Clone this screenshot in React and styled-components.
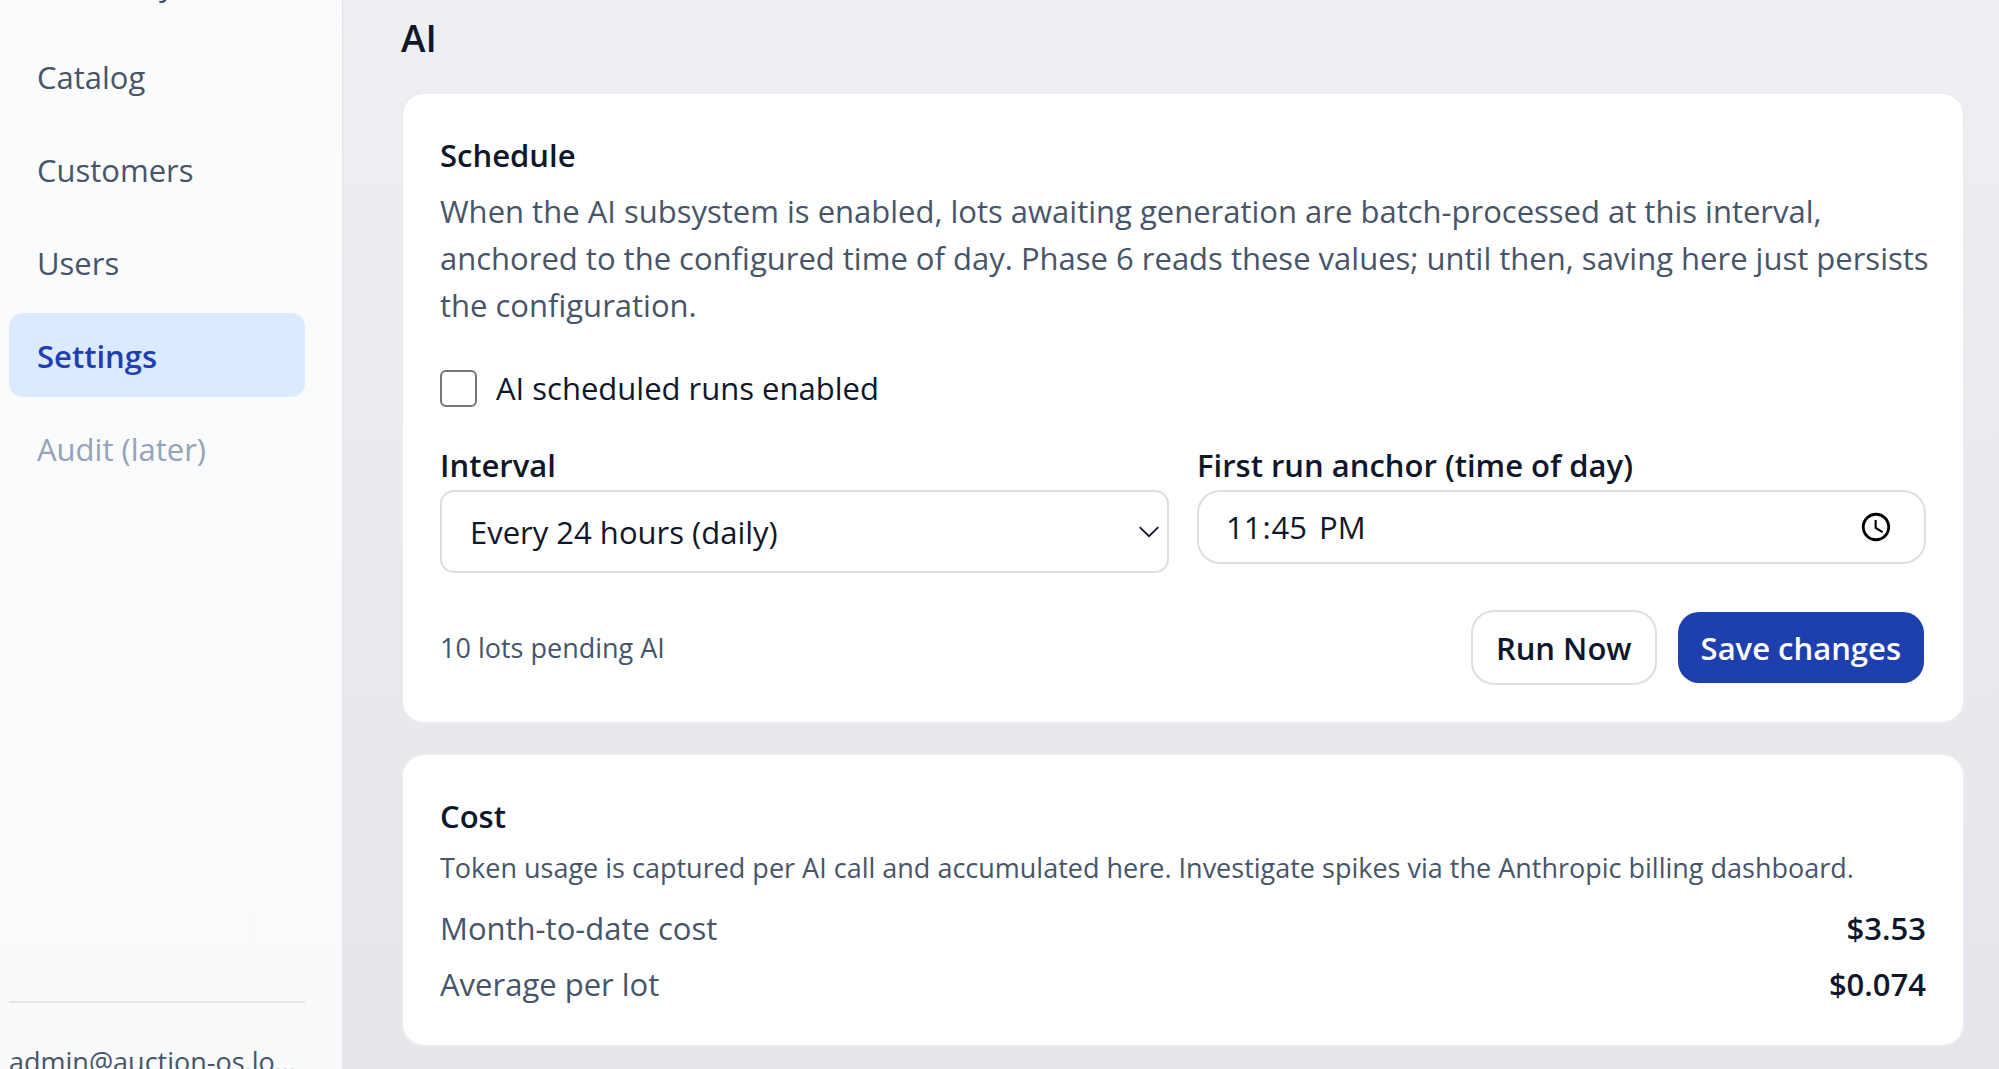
import React, { useState } from "react";
import styled, { createGlobalStyle } from "styled-components";

const NAV_ITEMS = [
    { label: "Inventory", href: "#inventory" },
    { label: "Catalog", href: "#catalog" },
    { label: "Customers", href: "#customers" },
    { label: "Users", href: "#users" },
    { label: "Settings", href: "#settings" },
];

const INTERVALS = [
    { value: "6", label: "Every 6 hours" },
    { value: "12", label: "Every 12 hours" },
    { value: "24", label: "Every 24 hours (daily)" },
];

const COSTS = [
    { label: "Month-to-date cost", value: "$3.53" },
    { label: "Average per lot", value: "$0.074" },
];

function Sidebar() {
    return (
        <Aside>
            <Nav>
                {NAV_ITEMS.map(({ label, href }) => (
                    <NavLink key={label} href={href} $active={label === "Settings"}>
                        {label}
                    </NavLink>
                ))}
                <NavDisabled>Audit (later)</NavDisabled>
            </Nav>
            <Account>admin@auction-os.local</Account>
        </Aside>
    );
}

function ScheduleCard() {
    const [enabled, setEnabled] = useState(false);
    const [interval, setInterval] = useState("24");
    const [anchor, setAnchor] = useState("23:45");

    return (
        <Card>
            <CardTitle>Schedule</CardTitle>
            <Description>
                When the AI subsystem is enabled, lots awaiting generation are
                batch-processed at this interval, anchored to the configured time
                of day. Phase 6 reads these values; until then, saving here just
                persists the configuration.
            </Description>
            <CheckLabel htmlFor="ai-enabled">
                <Checkbox
                    id="ai-enabled"
                    type="checkbox"
                    checked={enabled}
                    onChange={(e) => setEnabled(e.target.checked)}
                />
                AI scheduled runs enabled
            </CheckLabel>
            <Fields>
                <Field>
                    <FieldLabel htmlFor="interval">Interval</FieldLabel>
                    <SelectWrap>
                        <Select
                            id="interval"
                            value={interval}
                            onChange={(e) => setInterval(e.target.value)}
                        >
                            {INTERVALS.map(({ value, label }) => (
                                <option key={value} value={value}>
                                    {label}
                                </option>
                            ))}
                        </Select>
                        <Chevron viewBox="0 0 20 12" aria-hidden="true">
                            <path d="M.7 1.2 10 10.2 19.3 1.2" />
                        </Chevron>
                    </SelectWrap>
                </Field>
                <Field>
                    <FieldLabel htmlFor="anchor">
                        First run anchor (time of day)
                    </FieldLabel>
                    <TimeInput
                        id="anchor"
                        type="time"
                        value={anchor}
                        onChange={(e) => setAnchor(e.target.value)}
                    />
                </Field>
            </Fields>
            <Actions>
                <Hint>10 lots pending AI</Hint>
                <Button type="button">Run Now</Button>
                <Button type="button" $primary>
                    Save changes
                </Button>
            </Actions>
        </Card>
    );
}

function CostCard() {
    return (
        <Card>
            <CardTitle>Cost</CardTitle>
            <Hint>
                Token usage is captured per AI call and accumulated here.
                Investigate spikes via the Anthropic billing dashboard.
            </Hint>
            <CostList>
                {COSTS.map(({ label, value }) => (
                    <CostRow key={label}>
                        <dt>{label}</dt>
                        <dd>{value}</dd>
                    </CostRow>
                ))}
            </CostList>
        </Card>
    );
}

function App() {
    return (
        <>
            <GlobalStyle />
            <Layout>
                <Sidebar />
                <Main>
                    <PageTitle>AI</PageTitle>
                    <ScheduleCard />
                    <CostCard />
                </Main>
            </Layout>
        </>
    );
}

const GlobalStyle = createGlobalStyle`
    * {
        box-sizing: border-box;
    }

    body {
        margin: 0;
        color: #0f172a;
        font-family: "Segoe UI", "Open Sans", sans-serif;
        font-size: 31px;
        line-height: 47px;
    }

    h1, h2, p, dl, dd {
        margin: 0;
    }
`;

const Layout = styled.div`
    display: flex;
    height: 100vh;
    overflow: hidden;
    background: linear-gradient(#eeeff3, #e5e6eb);
`;

const Aside = styled.aside`
    display: flex;
    flex-direction: column;
    flex: none;
    width: 343px;
    padding: 0 37px 0 9px;
    border-right: 1px solid #e4e5e7;
    background: linear-gradient(#f9fbfd, #fbfcfb 12%, #fafbfc 25%, #f9fafc);
    overflow: hidden;
`;

const Nav = styled.nav`
    display: flex;
    flex-direction: column;
    gap: 9px;
    margin-top: -59px;
`;

const NavLink = styled.a`
    padding: 20px 28px 17px;
    border-radius: 14px;
    color: ${({ $active }) => ($active ? "#1e40af" : "#475569")};
    background: ${({ $active }) => ($active ? "#dbeafe" : "transparent")};
    font-weight: ${({ $active }) => ($active ? 600 : 400)};
    text-decoration: none;
`;

const NavDisabled = styled.span`
    padding: 20px 28px 17px;
    color: #94a3b8;
`;

const Account = styled.div`
    flex: none;
    height: 68px;
    margin-top: auto;
    padding-top: 39px;
    border-top: 2px solid #e6e7e9;
    color: #475569;
    font-size: 27px;
    line-height: 40px;
    overflow: hidden;
    text-overflow: ellipsis;
    white-space: nowrap;
`;

const Main = styled.main`
    display: flex;
    flex-direction: column;
    flex: 1;
    gap: 29px;
    min-width: 0;
    padding: 13px 34px 24px 58px;
`;

const PageTitle = styled.h1`
    font-size: 37px;
    font-weight: 600;
    line-height: 50px;
`;

const Card = styled.section`
    display: flex;
    flex-direction: column;
    padding: 38px 37px 37px;
    border: 2px solid #ebecee;
    border-radius: 23px;
    background: #fff;
`;

const CardTitle = styled.h2`
    margin-bottom: 9px;
    font-size: 31px;
    font-weight: 600;
    line-height: 47px;
`;

const Description = styled.p`
    margin-right: -12px;
    color: #475569;
`;

const CheckLabel = styled.label`
    display: flex;
    align-items: center;
    gap: 19px;
    margin-top: 36px;
`;

const Checkbox = styled.input`
    appearance: none;
    width: 37px;
    height: 37px;
    margin: 0;
    border: 2px solid #767676;
    border-radius: 6px;
    background: #fff;

    &:checked {
        border-color: #1e40af;
        background: #1e40af;
    }
`;

const Fields = styled.div`
    display: grid;
    grid-template-columns: 1fr 1fr;
    align-items: start;
    gap: 28px;
    margin-top: 30px;
`;

const Field = styled.div`
    display: flex;
    flex-direction: column;
    gap: 1px;
`;

const FieldLabel = styled.label`
    font-weight: 600;
`;

const SelectWrap = styled.div`
    position: relative;
`;

const Select = styled.select`
    appearance: none;
    width: 100%;
    height: 83px;
    padding: 2px 60px 0 28px;
    border: 2px solid #dddee2;
    border-radius: 14px;
    background: #fff;
    color: inherit;
    font: inherit;
`;

const Chevron = styled.svg`
    position: absolute;
    top: 36px;
    right: 10px;
    width: 20px;
    height: 12px;
    fill: none;
    stroke: #0f172a;
    stroke-width: 1.8;
    pointer-events: none;
`;

const TimeInput = styled.input`
    width: 100%;
    height: 74px;
    padding: 0 31px 0 26px;
    border: 2px solid #dddee2;
    border-radius: 23px;
    background: #fff;
    color: inherit;
    font: inherit;

    &::-webkit-datetime-edit-ampm-field {
        margin-left: 6px;
    }

    &::-webkit-calendar-picker-indicator {
        width: 34px;
        height: 34px;
        padding: 0;
    }
`;

const Actions = styled.div`
    display: flex;
    align-items: center;
    gap: 19px;
    margin-top: 37px;
`;

const Hint = styled.p`
    flex: 1;
    color: #475569;
    font-size: 27px;
    line-height: 38px;
`;

const Button = styled.button`
    height: 75px;
    padding: 2px 23px 0;
    border: 2px solid ${({ $primary }) => ($primary ? "transparent" : "#dddee2")};
    border-radius: 23px;
    background: ${({ $primary }) => ($primary ? "#1e40af" : "#fff")};
    background-clip: padding-box;
    color: ${({ $primary }) => ($primary ? "#fff" : "#0f172a")};
    font: inherit;
    font-weight: 600;
    cursor: pointer;
`;

const CostList = styled.dl`
    display: flex;
    flex-direction: column;
    gap: 9px;
    margin-top: 18px;
`;

const CostRow = styled.div`
    display: flex;
    justify-content: space-between;

    dt {
        color: #475569;
    }

    dd {
        font-weight: 600;
    }
`;

export default App;
